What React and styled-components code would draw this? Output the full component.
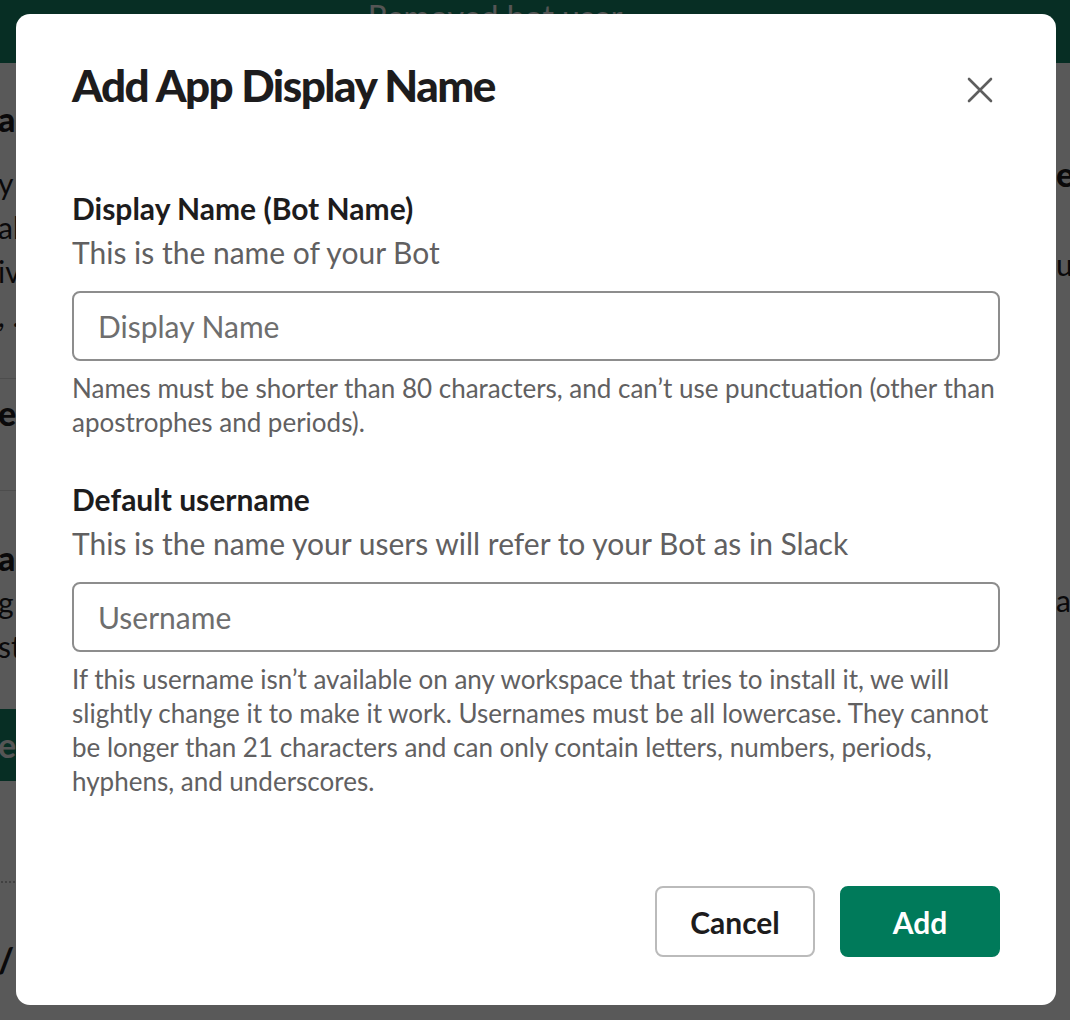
import React from "react"
import styled, { createGlobalStyle } from "styled-components"

const GlobalStyle = createGlobalStyle`
  html, body {
    margin: 0;
    padding: 0;
    font-family: Lato, "Noto Sans", sans-serif;
    color: #1d1c1d;
  }
`

// the page that sits behind the dimmed overlay
const Page = styled.div`
  position: relative;
  min-height: 1020px;
  background: #ffffff;
  overflow: hidden;
`

const Banner = styled.div`
  height: 63px;
  background: #148567;
  color: #f4f4f4;
  font-size: 32px;
  display: flex;
  justify-content: center;
  padding-right: 80px;
  line-height: 34px;
  overflow: hidden;
`

const PageBody = styled.div`
  display: flex;
  justify-content: space-between;
`

const Column = styled.div`
  display: flex;
  flex-direction: column;
  width: ${p => (p.$right ? "14px" : "40px")};
  margin-left: ${p => (p.$right ? "0" : "-2px")};
  padding-top: ${p => (p.$right ? "89px" : "34px")};
  font-size: 30px;
  line-height: 44px;
  white-space: nowrap;
`

const Frag = styled.div`
  font-weight: ${p => (p.$bold ? 900 : 400)};
  font-size: ${p => (p.$bold ? "34px" : "30px")};
  margin-top: ${p => p.$gap || 0}px;
`

const Rule = styled.div`
  height: 1px;
  background: #dddddd;
  margin-top: ${p => p.$gap || 0}px;
`

const GreenBlock = styled.div`
  height: 72px;
  background: #148567;
  color: #f4f4f4;
  font-weight: 700;
  font-size: 34px;
  line-height: 72px;
  margin-top: ${p => p.$gap || 0}px;
`

const DashedBox = styled.div`
  height: 80px;
  margin-top: ${p => p.$gap || 0}px;
  border-right: 2px dotted #bbbbbb;
  border-bottom: 2px dotted #bbbbbb;
`

const Overlay = styled.div`
  position: fixed;
  inset: 0;
  background: rgba(0, 0, 0, 0.65);
  display: flex;
  justify-content: flex-start;
  align-items: flex-start;
  padding: 14px 0 0 16px;
`

const Modal = styled.div`
  width: 1040px;
  height: 991px;
  box-sizing: border-box;
  background: #ffffff;
  border-radius: 14px;
  padding: 45px 56px 48px 56px;
  display: flex;
  flex-direction: column;
`

const Header = styled.div`
  display: flex;
  justify-content: space-between;
  align-items: flex-start;
`

const Title = styled.h1`
  margin: 0;
  font-size: 44px;
  line-height: 52px;
  font-weight: 900;
  letter-spacing: -1.5px;
  color: #1d1c1d;
`

const CloseButton = styled.button`
  width: 40px;
  height: 40px;
  margin-top: 11px;
  padding: 0;
  border: none;
  background: none;
  display: flex;
  align-items: center;
  justify-content: center;
  cursor: pointer;
`

const Field = styled.div`
  display: flex;
  flex-direction: column;
  margin-top: ${p => p.$gap}px;
`

const Label = styled.label`
  font-size: 30px;
  line-height: 40px;
  font-weight: 700;
  color: #1d1c1d;
  margin-bottom: 4px;
`

const Description = styled.div`
  font-size: 30px;
  line-height: 40px;
  color: #616061;
`

const Input = styled.input`
  margin-top: 19px;
  height: 70px;
  box-sizing: border-box;
  border: 2px solid #8d8d8d;
  border-radius: 8px;
  padding: 0 24px;
  font-family: Lato, "Noto Sans", sans-serif;
  font-size: 30px;
  color: #1d1c1d;
  outline: none;
  &::placeholder {
    color: #6e6e6e;
  }
`

const Hint = styled.p`
  margin: 10px 0 0;
  font-size: 26px;
  line-height: 34px;
  color: #616061;
`

const Footer = styled.div`
  margin-top: auto;
  display: flex;
  justify-content: flex-end;
  gap: 25px;
`

const Button = styled.button`
  width: 160px;
  height: 71px;
  box-sizing: border-box;
  border-radius: 8px;
  font-family: Lato, "Noto Sans", sans-serif;
  font-size: 30px;
  font-weight: 700;
  cursor: pointer;
  border: 2px solid ${p => (p.$primary ? "#007a5a" : "#bbbbbb")};
  background: ${p => (p.$primary ? "#007a5a" : "#ffffff")};
  color: ${p => (p.$primary ? "#ffffff" : "#1d1c1d")};
`

const CloseIcon = () => (
  <svg width="26" height="26" viewBox="0 0 26 26" fill="none">
    <path
      d="M2 2L24 24M24 2L2 24"
      stroke="#5e5e5e"
      strokeWidth="2.6"
      strokeLinecap="round"
    />
  </svg>
)

const App = () => {
  return (
    <>
      <GlobalStyle />
      <Page>
        <Banner>Removed bot user</Banner>
        <PageBody>
          <Column>
            <Frag $bold>ac</Frag>
            <Frag $gap={20}>y</Frag>
            <Frag>ab</Frag>
            <Frag>iv</Frag>
            <Frag>, .</Frag>
            <Rule $gap={41} />
            <Frag $bold $gap={12}>eg</Frag>
            <Rule $gap={55} />
            <Frag $bold $gap={45}>a</Frag>
            <Frag>g</Frag>
            <Frag>st</Frag>
            <GreenBlock $gap={41}>e</GreenBlock>
            <DashedBox $gap={20} />
            <Frag $bold $gap={55}>/</Frag>
          </Column>
          <Column $right>
            <Frag $bold>e</Frag>
            <Frag $gap={46}>us</Frag>
            <Frag $gap={292}>a</Frag>
          </Column>
        </PageBody>
      </Page>

      <Overlay>
        <Modal role="dialog" aria-label="Add App Display Name">
          <Header>
            <Title>Add App Display Name</Title>
            <CloseButton aria-label="Close">
              <CloseIcon />
            </CloseButton>
          </Header>

          <Field $gap={77}>
            <Label htmlFor="display-name">Display Name (Bot Name)</Label>
            <Description>This is the name of your Bot</Description>
            <Input id="display-name" placeholder="Display Name" />
            <Hint>
              Names must be shorter than 80 characters, and can’t use
              punctuation (other than apostrophes and periods).
            </Hint>
          </Field>

          <Field $gap={40}>
            <Label htmlFor="username">Default username</Label>
            <Description>
              This is the name your users will refer to your Bot as in Slack
            </Description>
            <Input id="username" placeholder="Username" />
            <Hint>
              If this username isn’t available on any workspace that tries to
              install it, we will slightly change it to make it work. Usernames
              must be all lowercase. They cannot be longer than 21 characters
              and can only contain letters, numbers, periods, hyphens, and
              underscores.
            </Hint>
          </Field>

          <Footer>
            <Button>Cancel</Button>
            <Button $primary>Add</Button>
          </Footer>
        </Modal>
      </Overlay>
    </>
  )
}

export default App
